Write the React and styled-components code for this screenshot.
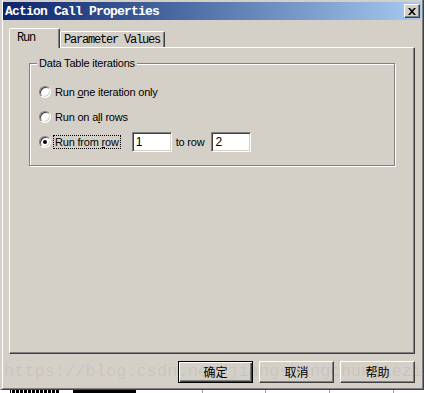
import React from "react";
import styled, { createGlobalStyle, css } from "styled-components";

const GlobalStyle = createGlobalStyle`
  html, body {
    margin: 0;
    padding: 0;
    background: #fff;
  }
  #root {
    width: 425px;
    height: 393px;
    overflow: hidden;
  }
`;

// Classic 3D colours
const FACE = "#d4d0c8";
const SHADOW = "#808080";
const DARK = "#404040";

const Page = styled.div`
  position: relative;
  width: 425px;
  height: 393px;
  display: flex;
  flex-direction: column;
  background: #fff;
`;

const Window = styled.div`
  width: 424px;
  height: 390px;
  box-sizing: border-box;
  background: ${FACE};
  border-style: solid;
  border-width: 0 1px 1px 2px;
  border-color: ${FACE} ${DARK} ${DARK} ${FACE};
  display: flex;
`;

const Frame = styled.div`
  flex: 1;
  display: flex;
  flex-direction: column;
  border-style: solid;
  border-width: 0 1px 1px 1px;
  border-color: #fff ${SHADOW} ${SHADOW} #fff;
  padding: 2px 1px 0 0;
`;

const TitleBar = styled.div`
  height: 18px;
  flex-shrink: 0;
  display: flex;
  align-items: center;
  justify-content: space-between;
  padding: 0 1px 0 2px;
  background: linear-gradient(to right, #0a246a, #a6caf0);
`;

const TitleText = styled.div`
  color: #fff;
  font-family: "Liberation Mono", monospace;
  font-weight: 700;
  font-size: 13px;
  letter-spacing: -0.8px;
`;

const CloseButton = styled.div`
  width: 16px;
  height: 14px;
  box-sizing: border-box;
  background: ${FACE};
  border: 1px solid;
  border-color: #fff ${DARK} ${DARK} #fff;
  box-shadow: inset -1px -1px 0 ${SHADOW};
  display: flex;
  align-items: center;
  justify-content: center;
`;

const Body = styled.div`
  flex: 1;
  display: flex;
  flex-direction: column;
  padding: 8px 6px 0 6px;
`;

const TabRow = styled.div`
  height: 19px;
  display: flex;
  align-items: flex-end;
`;

const Tab = styled.div`
  box-sizing: border-box;
  background: ${FACE};
  border: 1px solid;
  border-bottom: none;
  border-color: #fff ${DARK} transparent #fff;
  border-radius: 2px 2px 0 0;
  box-shadow: inset -1px 0 0 ${SHADOW};
  font-family: "Liberation Mono", monospace;
  font-size: 12px;
  letter-spacing: -1.2px;
  line-height: 14px;
  color: #000;
  white-space: nowrap;

  ${(p) =>
    p.$active
      ? css`
          position: relative;
          z-index: 1;
          width: 51px;
          height: 20px;
          margin-bottom: -1px;
          padding: 2px 0 0 7px;
        `
      : css`
          width: 105px;
          height: 16px;
          padding: 1px 0 0 3px;
        `}
`;

const Panel = styled.div`
  height: 307px;
  box-sizing: border-box;
  border: 1px solid;
  border-color: #fff ${DARK} ${DARK} #fff;
  box-shadow: inset -1px -1px 0 ${SHADOW};
  padding: 9px 19px 0 19px;
`;

const Group = styled.fieldset`
  margin: 0;
  min-width: 0;
  padding: 10px 0 11px 9px;
  border: 1px solid ${SHADOW};
  box-shadow: inset 1px 1px 0 #fff, 1px 1px 0 #fff;
`;

const Legend = styled.legend`
  margin-left: -2px;
  padding: 0 2px;
  background: ${FACE};
  font-family: "Liberation Sans", Arial, sans-serif;
  font-size: 11px;
  letter-spacing: -0.2px;
  line-height: 12px;
  color: #000;
`;

const OptionRow = styled.div`
  height: 25px;
  display: flex;
  align-items: center;
`;

const Radio = styled.span`
  width: 12px;
  height: 12px;
  box-sizing: border-box;
  flex-shrink: 0;
  border-radius: 50%;
  border: 1px solid;
  border-color: ${SHADOW} #fff #fff ${SHADOW};
  box-shadow: inset 1px 1px 0 ${DARK}, inset -1px -1px 0 ${FACE};
  background: #fff;
  display: flex;
  align-items: center;
  justify-content: center;
  margin-right: 2px;

  &::after {
    content: "";
    width: 4px;
    height: 4px;
    border-radius: 50%;
    background: ${(p) => (p.$checked ? "#000" : "transparent")};
  }
`;

const OptionLabel = styled.span`
  border: 1px dotted ${(p) => (p.$focus ? "#000" : "transparent")};
  padding: 0 1px;
  font-family: "Liberation Sans", Arial, sans-serif;
  font-size: 11px;
  letter-spacing: -0.2px;
  line-height: 12px;
  color: #000;
  white-space: nowrap;
`;

const Key = styled.span`
  text-decoration: underline;
`;

const TextBox = styled.input`
  width: 40px;
  height: 20px;
  box-sizing: border-box;
  margin: 0 0 0 ${(p) => p.$gap}px;
  padding: 0 0 0 3px;
  border: 1px solid;
  border-color: ${SHADOW} #fff #fff ${SHADOW};
  box-shadow: inset 1px 1px 0 ${DARK}, inset -1px -1px 0 ${FACE};
  background: #fff;
  outline: none;
  font-family: "Liberation Sans", Arial, sans-serif;
  font-size: 12px;
  color: #000;
`;

const InlineText = styled.span`
  margin-left: 4px;
  font-family: "Liberation Sans", Arial, sans-serif;
  font-size: 11px;
  letter-spacing: -0.2px;
  color: #000;
`;

const ButtonRow = styled.div`
  margin-top: 7px;
  display: flex;
  justify-content: flex-end;
  gap: 6px;
`;

const Button = styled.button`
  width: 75px;
  height: 22px;
  box-sizing: border-box;
  margin: 0;
  padding: 0;
  background: ${FACE};
  border: 1px solid;
  border-color: #fff ${DARK} ${DARK} #fff;
  box-shadow: inset -1px -1px 0 ${SHADOW};
  font-family: "Noto Sans CJK SC", sans-serif;
  font-size: 12px;
  line-height: 18px;
  color: #000;

  ${(p) =>
    p.$default &&
    css`
      border-color: #000;
      box-shadow: inset 1px 1px 0 #fff, inset -1px -1px 0 ${DARK},
        inset -2px -2px 0 ${SHADOW};
    `}
`;

// faint blog watermark stamped over the bottom of the shot
const Watermark = styled.div`
  position: absolute;
  left: 4px;
  top: 361px;
  z-index: 2;
  pointer-events: none;
  font-family: "Liberation Mono", monospace;
  font-size: 17px;
  line-height: 22px;
  color: rgba(0, 0, 0, 0.07);
  white-space: nowrap;
`;

// edge of the window lying behind
const BehindStrip = styled.div`
  height: 3px;
  background: linear-gradient(
      to right,
      transparent 0 202px,
      #9a9a9a 202px 203px,
      transparent 203px 265px,
      #9a9a9a 265px 266px,
      transparent 266px 329px,
      #9a9a9a 329px 330px,
      transparent 330px 393px,
      #9a9a9a 393px 394px,
      transparent 394px
    ),
    linear-gradient(
      to right,
      #fff 0 10px,
      transparent 10px 60px,
      #fff 60px 73px,
      #000 73px 136px,
      #fff 136px
    ),
    repeating-linear-gradient(to right, #000 0 3px, #fff 3px 4px);
`;

function CloseGlyph() {
  return (
    <svg width="8" height="7" viewBox="0 0 8 7">
      <path d="M0 0h2l2 2.3L6 0h2L5 3.5 8 7H6L4 4.7 2 7H0l3-3.5z" fill="#000" />
    </svg>
  );
}

export default function App() {
  return (
    <>
      <GlobalStyle />
      <Page>
        <Window>
          <Frame>
            <TitleBar>
              <TitleText>Action Call Properties</TitleText>
              <CloseButton>
                <CloseGlyph />
              </CloseButton>
            </TitleBar>

            <Body>
              <TabRow>
                <Tab $active>Run</Tab>
                <Tab>Parameter Values</Tab>
              </TabRow>

              <Panel>
                <Group>
                  <Legend>Data Table iterations</Legend>
                  <OptionRow>
                    <Radio />
                    <OptionLabel>
                      Run <Key>o</Key>ne iteration only
                    </OptionLabel>
                  </OptionRow>
                  <OptionRow>
                    <Radio />
                    <OptionLabel>
                      Run on a<Key>l</Key>l rows
                    </OptionLabel>
                  </OptionRow>
                  <OptionRow>
                    <Radio $checked />
                    <OptionLabel $focus>
                      Run from <Key>r</Key>ow
                    </OptionLabel>
                    <TextBox $gap={11} defaultValue="1" readOnly />
                    <InlineText>to row</InlineText>
                    <TextBox $gap={7} defaultValue="2" readOnly />
                  </OptionRow>
                </Group>
              </Panel>

              <ButtonRow>
                <Button $default>确定</Button>
                <Button>取消</Button>
                <Button>帮助</Button>
              </ButtonRow>
            </Body>
          </Frame>
        </Window>
        <BehindStrip />
        <Watermark>https://blog.csdn.net/jiangshangchunjiezi</Watermark>
      </Page>
    </>
  );
}
